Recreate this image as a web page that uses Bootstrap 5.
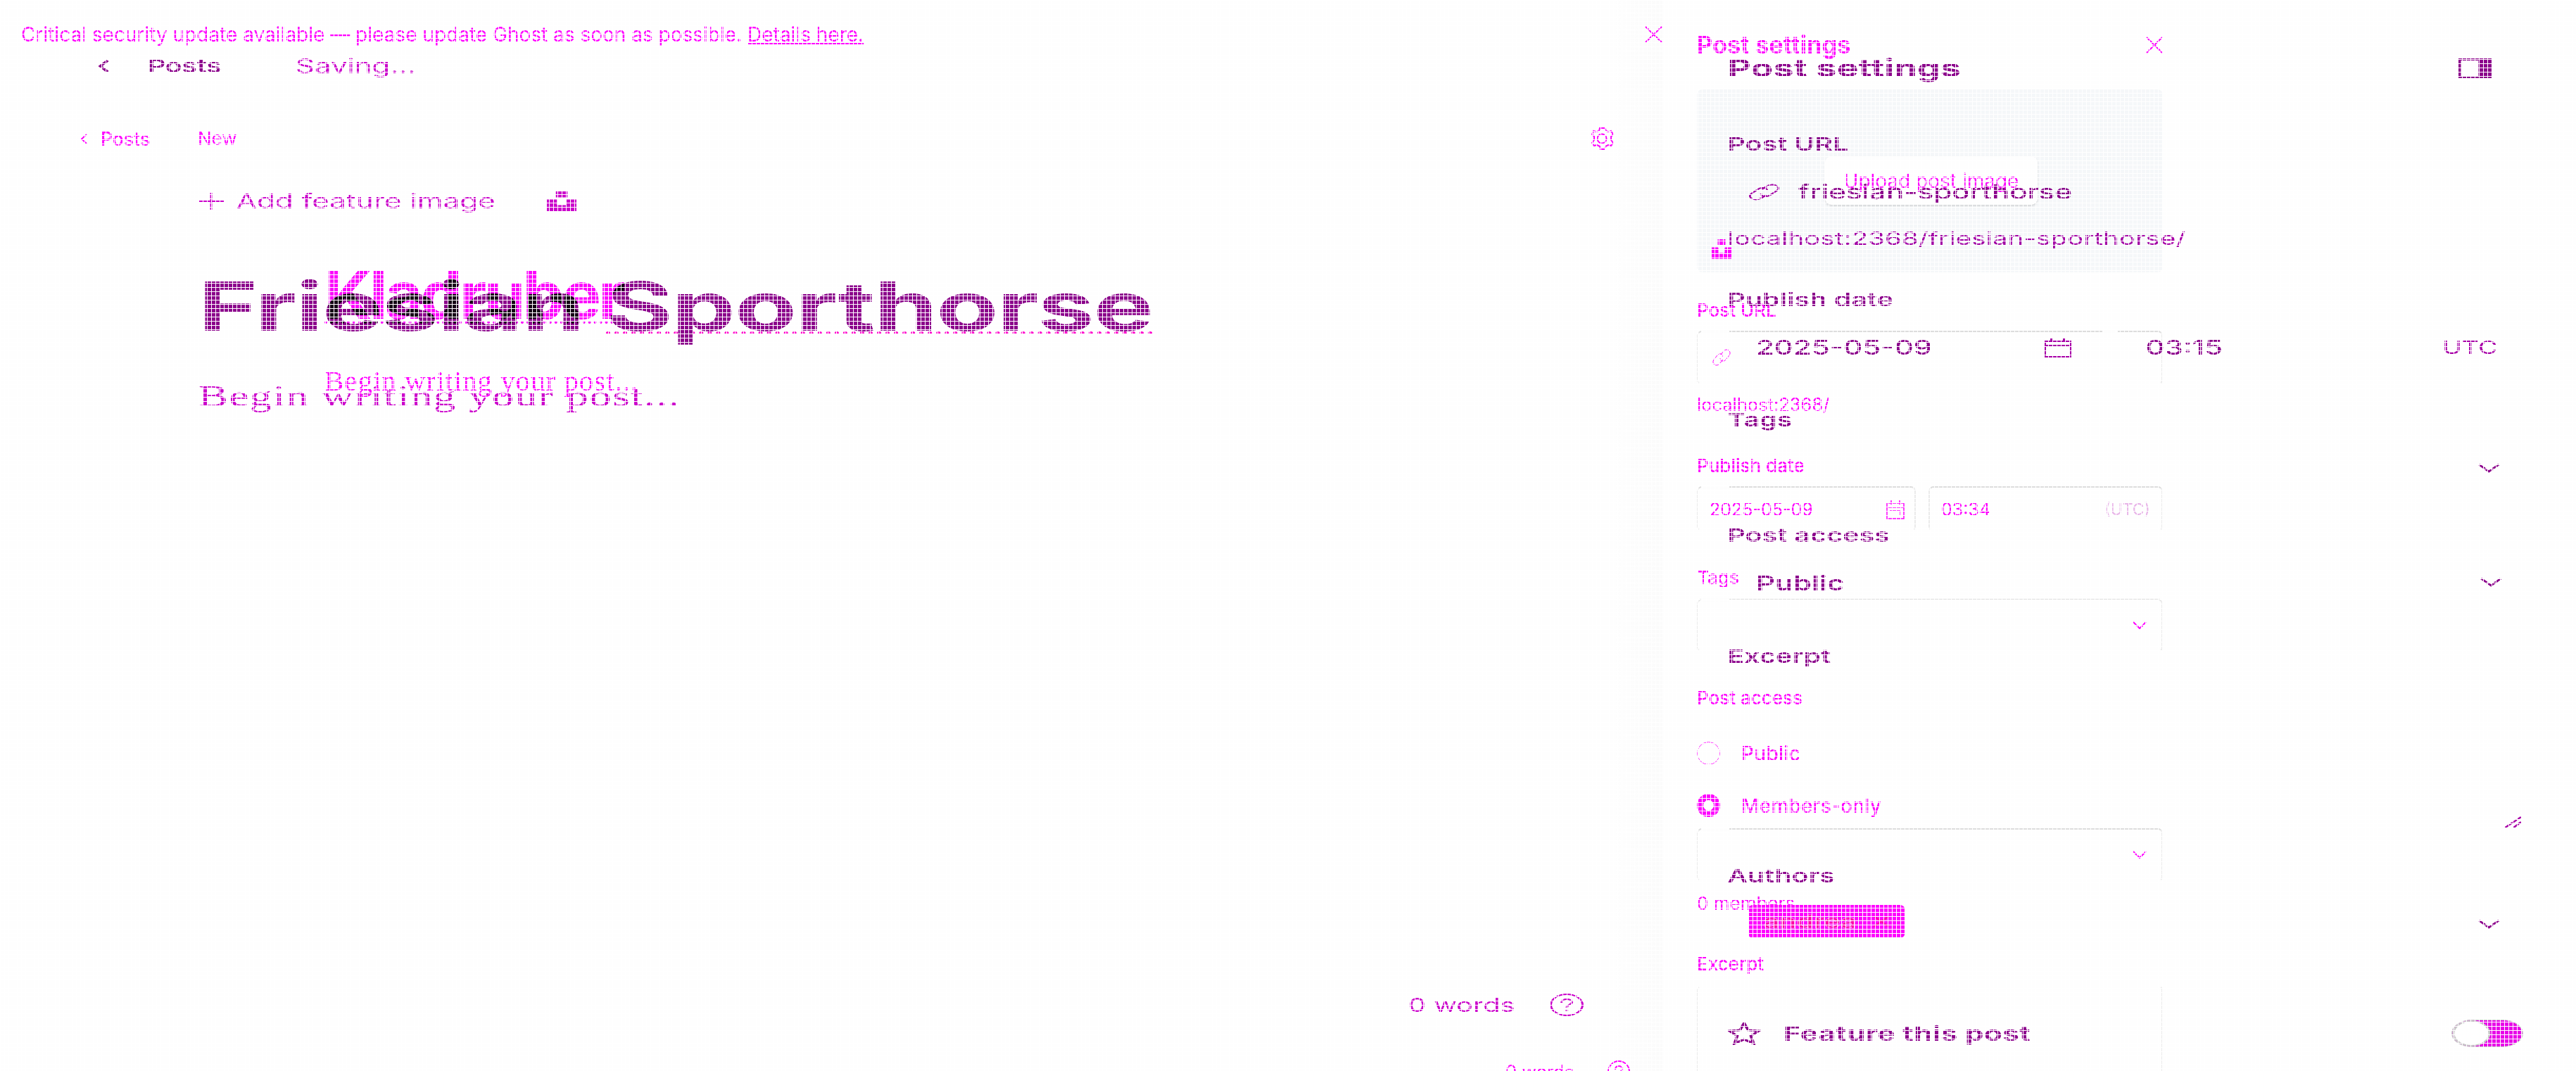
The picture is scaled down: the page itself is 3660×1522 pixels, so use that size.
<!DOCTYPE html>
<html lang="en">
<head>
<meta charset="utf-8">
<title>Post settings</title>
<link href="https://cdn.jsdelivr.net/npm/bootstrap@5.3.0/dist/css/bootstrap.min.css" rel="stylesheet">
<script src="https://cdn.jsdelivr.net/npm/bootstrap@5.3.0/dist/js/bootstrap.bundle.min.js"></script>
<style>
html,body{height:1522px;overflow:hidden;background:#fefefe}
body{font-family:Inter,"Liberation Sans",sans-serif;font-size:26px;line-height:30px;margin:0;position:relative;white-space:nowrap}
svg{display:block;fill:none;stroke:currentColor;flex:none}
.screen{position:absolute;left:0;top:0;height:1522px;overflow:hidden}
.before{width:2440px;transform:scale(1.5,1);transform-origin:0 0;color:#8b008b;font-weight:600}
.after{width:3660px;color:#f0f;font-weight:500}
.mesh{position:absolute;inset:0;z-index:10;background:repeating-linear-gradient(90deg,#fff 0 1px,transparent 1px 6px),repeating-linear-gradient(#fff 0 1px,transparent 1px 6px)}
.soft{color:#cb00cb;font-weight:400}
.mid{color:#a800a8;font-weight:400}
.serif{font-family:"Liberation Serif",serif;font-weight:400;letter-spacing:.95px}
.h-set{font-size:34.400px;font-weight:700}
.squig{border-bottom:4px dotted}
/* stretched screen */
.before .main{width:1500px;padding-left:92px;flex:none}
.before .side{padding-left:136.3px;width:940px;letter-spacing:.2px}
.b-nav{margin-top:79px}.b-nav .bk{width:48px}.b-nav .po{width:140px}.b-nav .soft{font-size:28px}
.b-feat{margin-top:162px;margin-left:96px;font-size:28px}
.b-feat .lbl{width:294px;margin-left:12px;letter-spacing:.08px}
.b-title{margin:84px 0 0 96px;font-size:96px;line-height:100px;font-weight:700;height:100px;letter-spacing:-1px}
.b-title .squig{display:inline-block;height:90px;border-color:#f0c}
.b-body{margin:58px 0 0 96px;font-size:42px;height:40px;line-height:40px}
.b-foot{margin:829px 0 0 1242px;font-size:26.5px}.b-foot .wc{width:135px}
.s1{margin-top:82px}.s2{margin-top:78px}.s3{margin-top:38px;padding-left:20px;font-size:28px;font-weight:500;letter-spacing:0;height:30px}
.s3 svg{margin-right:17px}.s4{margin-top:36px;letter-spacing:.12px;font-size:25.5px}.s5{margin-top:57px}.s6{margin-top:38px;padding-left:27px;font-size:28px;font-weight:500;letter-spacing:0}
.s6 .da{width:273px}.s6 .ca{width:96px}.s6 .ti{width:281px}.s6 .tz{font-size:25px}
.s7{margin-top:73px}.s8{margin-top:38px;height:30px;padding-left:711px}.s9{margin-top:66px}
.s10{margin-top:38px;padding-left:27px;font-size:28px;letter-spacing:0}.s10 span{width:686px}
.s10 svg{margin-top:-4px}
.s11{margin-top:74px}.s12{margin-top:205px;height:30px;padding-left:736px}.s13{margin-top:47px}
.s14{margin-top:26px;height:47px;padding-left:20px}.chip{width:148px;height:47px;background:#f0f;border-radius:5px;color:#ff00a8;font-size:26px;padding:0 14px;-webkit-text-stroke:.6px #f0b0f0}
.s14 svg.v{margin-left:543px;margin-top:7px}
.s15{margin-top:116px;font-size:28px;font-weight:700;letter-spacing:.3px}.s15 svg.st{margin-right:21px}.s15 span.ft{width:633px}
.toggle{width:68px;height:39px;border-radius:20px;background:#e800e8;border:1px solid #ccc}
.toggle i{display:block;width:36px;height:37px;border-radius:50%;background:#fff;border:2px solid #c8c8c8}
/* plain screen */
.after .main{width:2362px;padding-left:30px;flex:none;background:linear-gradient(90deg,transparent 2290px,#fbfbfb)}
.after .side{padding-left:49px;width:711px;flex:none;mix-blend-mode:multiply}
.a-ban{margin-top:34px;font-size:28px;font-weight:400}
.a-nav{margin-top:117px;padding-left:84px;height:32px}.a-nav .po{margin-left:18px;width:138px;font-size:26.500px}.a-nav .nw{font-weight:400}
.a-title{margin:156px 0 0 431px;font-size:94px;line-height:100px;height:100px;font-weight:700;letter-spacing:-3.7px;color:#7e007e;mix-blend-mode:color-burn}
.a-title .squig{display:inline-block;height:91px;width:411px}
.a-body{margin:52px 0 0 431px;font-size:41px;line-height:40px}
.a-foot{margin:946px 0 0 2109px;height:32px;font-weight:400;font-size:25.5px}.a-foot .wc{width:145px}
.t1{margin-top:49px}.upload{margin-top:48px;height:260px;background:#f6f8fa;border-radius:8px;padding:95px 182px 0}
.upload .pick{height:69px;background:#fff;border-radius:9px;box-shadow:0 2px 3px #0002;font-size:28px;font-weight:400;line-height:58px;width:302px;padding-top:6px;text-align:center}
.upload .us{margin:49px 0 0 -161px}
.t2{margin-top:39px}.fld{border:2px solid #dedede;border-left-color:#ececec;border-right-color:#ececec;border-bottom-color:transparent;border-radius:7px;height:77px;margin-top:14px;padding:0 21px 0 20px;position:relative}
.cut::before{content:"";position:absolute;left:4px;top:-3px;width:40px;height:5px;background:#fefefe}
.hole::after{content:"";position:absolute;left:574px;top:-3px;width:22px;height:5px;background:#fefefe}
.t3{margin-top:13px;font-weight:400;font-size:25.5px}.t4{margin-top:57px}.dates{margin-top:14px;gap:18px}.dt{height:64px;font-size:25px;font-weight:400;margin-top:0;padding:2px 16px 0 16px}
.dt1{width:311px;padding-right:14px;flex:none}
.t5{margin-top:51px}.t6{margin-top:50px}.t7{margin-top:47px;height:33px}.t8{margin-top:41px;height:33px;font-size:28px;letter-spacing:.2px}.t7{font-size:28px;letter-spacing:.3px}
.t7 span,.t8 span{margin-left:30px}.t9{margin-top:16px;font-weight:400}.t10{margin-top:56px}
.dot{width:33px;height:33px;border-radius:50%;border:1.5px solid #f3f}.on{border:9px solid #f0f}
.f15{margin-top:15px;height:76px}.f16{margin-top:16px;height:76px}
.area{height:140px;border-top-color:transparent}
.utc{color:#e9b5e9;font-size:23px}
</style>
</head>
<body>
<div class="screen before d-flex">
  <div class="main">
    <div class="b-nav d-flex align-items-center"><div class="bk"><svg width="12" height="18" viewBox="0 0 12 18" stroke-width="3"><path d="M10 1 3 9l7 8"/></svg></div><span class="po">Posts</span><span class="soft">Saving...</span></div>
    <div class="b-feat soft d-flex align-items-center"><svg width="24" height="26" viewBox="0 0 24 26" stroke-width="2"><path d="M12 1v24M0 13h24"/></svg><span class="lbl">Add feature image</span><svg width="28" height="28" viewBox="0 0 28 28" stroke="none"><path fill="currentColor" d="M9 0h10v8H9zM0 12h9v8h10v-8h9v16H0z"/></svg></div>
    <h1 class="b-title">Friesian <span class="squig">Sporthorse</span></h1>
    <p class="b-body serif soft mb-0">Begin writing your post...</p>
    <div class="b-foot soft d-flex align-items-center"><span class="wc">0 words</span><svg width="32" height="32" viewBox="0 0 32 32" stroke-width="2"><circle cx="16" cy="16" r="15"/><path d="M11 13c0-7 10-6 10-1 0 4-5 3-5 8M16 22v3"/></svg></div>
  </div>
  <div class="side">
    <div class="s1 h-set d-flex align-items-center"><span class="flex-fill">Post settings</span><svg width="112" height="28" viewBox="0 0 112 28" stroke-width="3"><path d="M1.500 1.500h29v25h-29z"/><path fill="currentColor" d="M21 1h10v26H21z"/></svg></div>
    <div class="s2">Post URL</div>
    <div class="s3 d-flex align-items-center"><svg class="mid" width="30" height="24" viewBox="0 0 30 24" stroke-width="1.800"><path d="M13 8 17 4c6-6 15 0 10 6l-6 6c-4 4-9 2-9-2M17 16l-4 4c-6 6-15 0-10-6l6-6c4-4 9-2 9 2"/></svg><span>friesian-sporthorse</span></div>
    <div class="s4 mid">localhost:2368/friesian-sporthorse/</div>
    <div class="s5">Publish date</div>
    <div class="s6 d-flex align-items-center"><span class="da">2025-05-09</span><div class="ca mid"><svg width="26" height="27" viewBox="0 0 26 27" stroke-width="2"><path d="M1 4h24v22H1zM1 10h24M7 0v6M19 0v6"/></svg></div><span class="ti">03:15</span><span class="mid tz">UTC</span></div>
    <div class="s7">Tags</div>
    <div class="s8 d-flex align-items-center"><svg width="21" height="13" viewBox="0 0 21 13" stroke-width="2.500"><path d="m1 1 9.500 10L20 1"/></svg></div>
    <div class="s9">Post access</div>
    <div class="s10 d-flex align-items-center"><span>Public</span><svg width="21" height="13" viewBox="0 0 21 13" stroke-width="2.500"><path d="m1 1 9.500 10L20 1"/></svg></div>
    <div class="s11">Excerpt</div>
    <div class="s12 mid d-flex align-items-center"><svg width="17" height="17" viewBox="0 0 17 17" stroke-width="2"><path d="M1 16 16 1M9 16l7-8"/></svg></div>
    <div class="s13">Authors</div>
    <div class="s14 d-flex align-items-center"><div class="chip d-flex align-items-center justify-content-between"><span>andrea</span><svg width="16" height="17" viewBox="0 0 16 17" stroke-width="2" stroke="#f4b8f0"><path d="m1 1 14 15M15 1 1 16"/></svg></div><svg class="v" width="21" height="13" viewBox="0 0 21 13" stroke-width="2.500"><path d="m1 1 9.500 10L20 1"/></svg></div>
    <div class="s15 d-flex align-items-center"><svg class="st" width="32" height="33" viewBox="0 0 32 33" stroke-width="2.800"><path d="m16 2 4 10 10 1-7.500 7 2.500 11-9-6-9 6 2.500-11L2 13l10-1z"/></svg><span class="ft">Feature this post</span><div class="toggle"><i></i></div></div>
  </div>
</div>
<div class="screen after d-flex">
  <div class="main">
    <div class="a-ban d-flex align-items-center justify-content-between"><span>Critical security update available — please update Ghost as soon as possible. <u>Details here.</u></span><svg width="25" height="24" viewBox="0 0 25 24" stroke-width="2"><path d="m1 1 23 22M24 1 1 23"/></svg></div>
    <div class="a-nav d-flex align-items-center"><svg width="11" height="15" viewBox="0 0 11 15" stroke-width="2"><path d="M9 1 2 7.500 9 14"/></svg><span class="po">Posts</span><span class="nw">New</span><svg class="ms-auto me-5" width="54" height="32" viewBox="0 0 54 32" stroke-width="2"><path d="m13 1-1 4-4 1-4-1-2 5 3 3v5l-3 4 3 4 4-1 4 2 1 4h6l1-4 4-2 4 1 3-4-3-4v-5l3-3-3-5-4 1-3-1-2-4z"/><circle cx="16" cy="16" r="6.500"/></svg></div>
    <h1 class="a-title mb-0"><span class="squig">Kladruber</span></h1>
    <p class="a-body serif mb-0">Begin writing your post...</p>
    <div class="a-foot d-flex align-items-center"><span class="wc">0 words</span><svg width="32" height="32" viewBox="0 0 32 32" stroke-width="2"><circle cx="16" cy="16" r="15"/><path d="M11 13c0-7 10-6 10-1 0 4-5 3-5 8M16 22v3"/></svg></div>
  </div>
  <div class="side">
    <div class="t1 h-set d-flex align-items-center justify-content-between"><span>Post settings</span><svg width="24" height="24" viewBox="0 0 24 24" stroke-width="2"><path d="m1 1 22 22M23 1 1 23"/></svg></div>
    <div class="upload"><div class="pick">Upload post image</div><svg class="us" width="28" height="28" viewBox="0 0 28 28" stroke="none"><path fill="currentColor" d="M9 0h10v8H9zM0 12h9v8h10v-8h9v16H0z"/></svg></div>
    <div class="t2">Post URL</div>
    <div class="fld cut hole d-flex align-items-center"><svg width="26" height="25" viewBox="0 0 26 25" stroke-width="1" stroke="#f5f"><path d="m11 9 5-6c4-5 12 0 8 6l-5 6c-3 4-8 2-8-2M15 15l-5 6c-4 5-12 0-8-6l5-6c3-4 8-2 8 2"/></svg></div>
    <div class="t3">localhost:2368/</div>
    <div class="t4">Publish date</div>
    <div class="d-flex dates"><div class="fld dt dt1 cut d-flex align-items-center justify-content-between"><span>2025-05-09</span><svg width="26" height="27" viewBox="0 0 26 27" stroke-width="1.500" stroke="#dba8db"><path d="M1 4h24v22H1zM1 10h24M7 0v6M19 0v6M5 15h15v7"/></svg></div><div class="fld dt d-flex flex-fill align-items-center justify-content-between"><span>03:34</span><span class="utc">(UTC)</span></div></div>
    <div class="t5">Tags</div>
    <div class="fld cut f15 d-flex align-items-center justify-content-end"><svg width="20" height="12" viewBox="0 0 20 12" stroke-width="2"><path d="m1 1 9 9 9-9"/></svg></div>
    <div class="t6">Post access</div>
    <div class="t7 d-flex align-items-center"><div class="dot"></div><span>Public</span></div>
    <div class="t8 d-flex align-items-center"><div class="dot on"></div><span>Members-only</span></div>
    <div class="fld cut f16 d-flex align-items-center justify-content-end"><svg width="20" height="12" viewBox="0 0 20 12" stroke-width="2"><path d="m1 1 9 9 9-9"/></svg></div>
    <div class="t9">0 members</div>
    <div class="t10">Excerpt</div>
    <div class="fld f15 area"></div>
  </div>
</div>
<div class="mesh"></div>
</body>
</html>
